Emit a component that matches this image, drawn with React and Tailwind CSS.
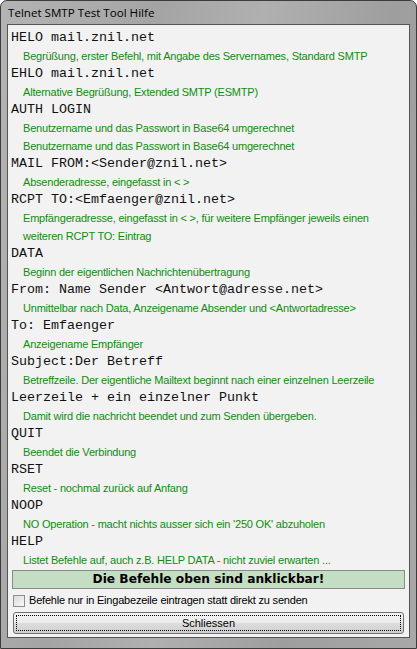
import React from "react";

const rows = [
  { c: "HELO mail.znil.net", d: ["Begrüßung, erster Befehl, mit Angabe des Servernames, Standard SMTP"] },
  { c: "EHLO mail.znil.net", d: ["Alternative Begrüßung, Extended SMTP (ESMTP)"] },
  { c: "AUTH LOGIN", d: ["Benutzername und das Passwort in Base64 umgerechnet", "Benutzername und das Passwort in Base64 umgerechnet"] },
  { c: "MAIL FROM:<Sender@znil.net>", d: ["Absenderadresse, eingefasst in < >"] },
  { c: "RCPT TO:<Emfaenger@znil.net>", d: ["Empfängeradresse, eingefasst in < >, für weitere Empfänger jeweils einen", "weiteren RCPT TO: Eintrag"] },
  { c: "DATA", d: ["Beginn der eigentlichen Nachrichtenübertragung"] },
  { c: "From: Name Sender <Antwort@adresse.net>", d: ["Unmittelbar nach Data, Anzeigename Absender und <Antwortadresse>"] },
  { c: "To: Emfaenger", d: ["Anzeigename Empfänger"] },
  { c: "Subject:Der Betreff", d: ["Betreffzeile. Der eigentliche Mailtext beginnt nach einer einzelnen Leerzeile"] },
  { c: "Leerzeile + ein einzelner Punkt", d: ["Damit wird die nachricht beendet und zum Senden übergeben."] },
  { c: "QUIT", d: ["Beendet die Verbindung"] },
  { c: "RSET", d: ["Reset - nochmal zurück auf Anfang"] },
  { c: "NOOP", d: ["NO Operation - macht nichts ausser sich ein '250 OK' abzuholen"] },
  { c: "HELP", d: ["Listet Befehle auf, auch z.B. HELP DATA - nicht zuviel erwarten ..."] },
];

export default function App() {
  return (
    <div className="w-[417px] h-[649px] flex flex-col rounded-t-[7px] border border-[#3c3c3c] bg-[linear-gradient(100deg,#b4b4b4_0%,#a4a4a4_30%,#b0b0b0_50%,#9e9e9e_75%,#a8a8a8_100%)] overflow-hidden">
      <div className="h-[23px] flex items-center pl-[7px] text-[11.6px] text-black" style={{ fontFamily: '"Open Sans", "Noto Sans", sans-serif' }}>
        Telnet SMTP Test Tool Hilfe
      </div>
      <div className="mx-[6px] mb-[10px] flex-1 border border-[#555555] bg-[#f2f2f2] flex flex-col">
        <div className="pt-[4px] flex flex-col">
          {rows.map((r, i) => (
            <React.Fragment key={i}>
              <div className="h-[18px] flex items-center pl-[3px] text-[13.33px] text-[#111111] whitespace-nowrap" style={{ fontFamily: '"Liberation Mono", monospace' }}>
                {r.c}
              </div>
              {r.d.map((t, j) => (
                <div key={j} className="h-[18px] flex items-center pl-[15px] text-[11px] text-[#108c10] whitespace-nowrap tracking-[-0.2px]" style={{ fontFamily: '"Liberation Sans", Arial, sans-serif' }}>
                  {t}
                </div>
              ))}
            </React.Fragment>
          ))}
        </div>
        <div className="mt-[1px] ml-[4px] w-[393px] h-[19px] border border-[#8a8a8a] bg-[#c3dec3] flex items-center justify-center text-[12.2px] font-bold text-black" style={{ fontFamily: '"DejaVu Sans", Verdana, sans-serif' }}>
          Die Befehle oben sind anklickbar!
        </div>
        <div className="mt-[5px] ml-[5px] flex items-center gap-[4px] h-[13px]">
          <div className="w-[12px] h-[12px] border border-[#8e8f8f] bg-[linear-gradient(135deg,#dcdcdc,#f8f8f8)]" />
          <span className="text-[11px] text-black tracking-[-0.2px]" style={{ fontFamily: '"Liberation Sans", Arial, sans-serif' }}>
            Befehle nur in Eingabezeile eintragen statt direkt zu senden
          </span>
        </div>
        <div className="mt-[5px] ml-[5px] w-[391px] h-[22px] rounded-[3px] border border-[#707070] bg-[linear-gradient(to_bottom,#f3f3f3_0%,#ebebeb_50%,#dddddd_51%,#cfcfcf_100%)] p-[2px]">
          <div className="w-full h-full border border-dotted border-black flex items-center justify-center text-[11px] text-black" style={{ fontFamily: '"Liberation Sans", Arial, sans-serif' }}>
            Schliessen
          </div>
        </div>
      </div>
    </div>
  );
}
